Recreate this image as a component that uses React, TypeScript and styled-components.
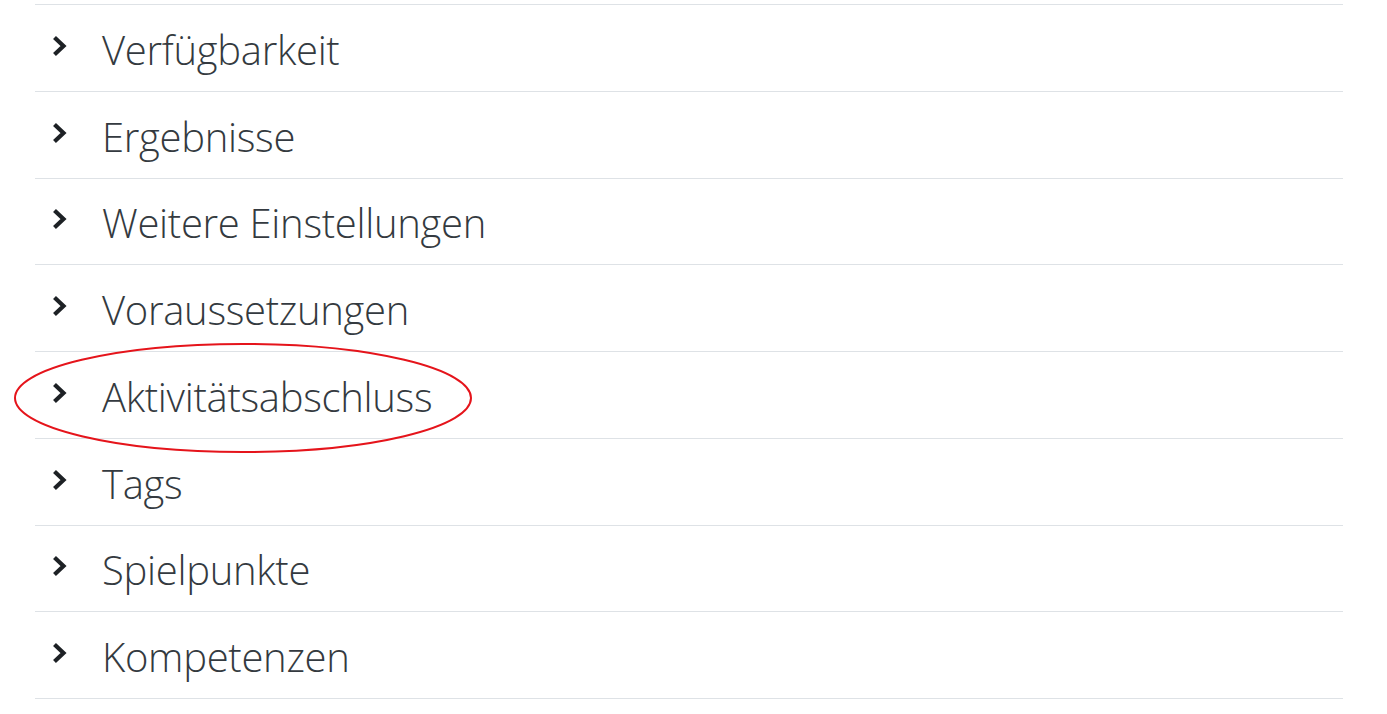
import React from "react";
import styled, { createGlobalStyle } from "styled-components";

const GlobalStyle = createGlobalStyle`
    body {
        margin: 0;
        background: #ffffff;
        font-family: "Open Sans", "Liberation Sans", sans-serif;
    }
`;

const Page = styled.div`
    padding: 4px 44px 0 35px;
`;

const List = styled.div`
    border-top: 1px solid #dee2e6;
`;

const Row = styled.div`
    position: relative;
    display: flex;
    align-items: center;
    height: 85.75px;
    border-bottom: 1px solid #dee2e6;
`;

const Toggle = styled.span`
    display: flex;
    width: 18px;
    margin-left: 16px;
    margin-right: 33px;
    margin-bottom: 4px;
    color: #1d2125;
`;

const Label = styled.span`
    padding-top: 3px;
    font-size: 40px;
    font-weight: 300;
    color: #343a40;
    letter-spacing: -0.3px;
`;

const Highlight = styled.svg`
    position: absolute;
    left: -21px;
    top: -9px;
    pointer-events: none;
`;

const Chevron = () => (
    <svg width="18" height="24" viewBox="0 0 18 24">
        <path d="M3.5 3.5 L12.5 12 L3.5 20.5" fill="none" stroke="currentColor" strokeWidth="4.2" strokeLinejoin="miter" />
    </svg>
);

const sections = [
    "Verfügbarkeit",
    "Ergebnisse",
    "Weitere Einstellungen",
    "Voraussetzungen",
    "Aktivitätsabschluss",
    "Tags",
    "Spielpunkte",
    "Kompetenzen",
];

const App = () => {
    return (
        <Page>
            <GlobalStyle />
            <List>
                {sections.map((title) => (
                    <Row key={title}>
                        <Toggle><Chevron /></Toggle>
                        <Label>{title}</Label>
                        {title === "Aktivitätsabschluss" && (
                            <Highlight width="462" height="112" viewBox="0 0 462 112">
                                <ellipse cx="229" cy="55" rx="228" ry="54" fill="none" stroke="#e5141b" strokeWidth="2" />
                            </Highlight>
                        )}
                    </Row>
                ))}
            </List>
        </Page>
    );
};

export default App;
